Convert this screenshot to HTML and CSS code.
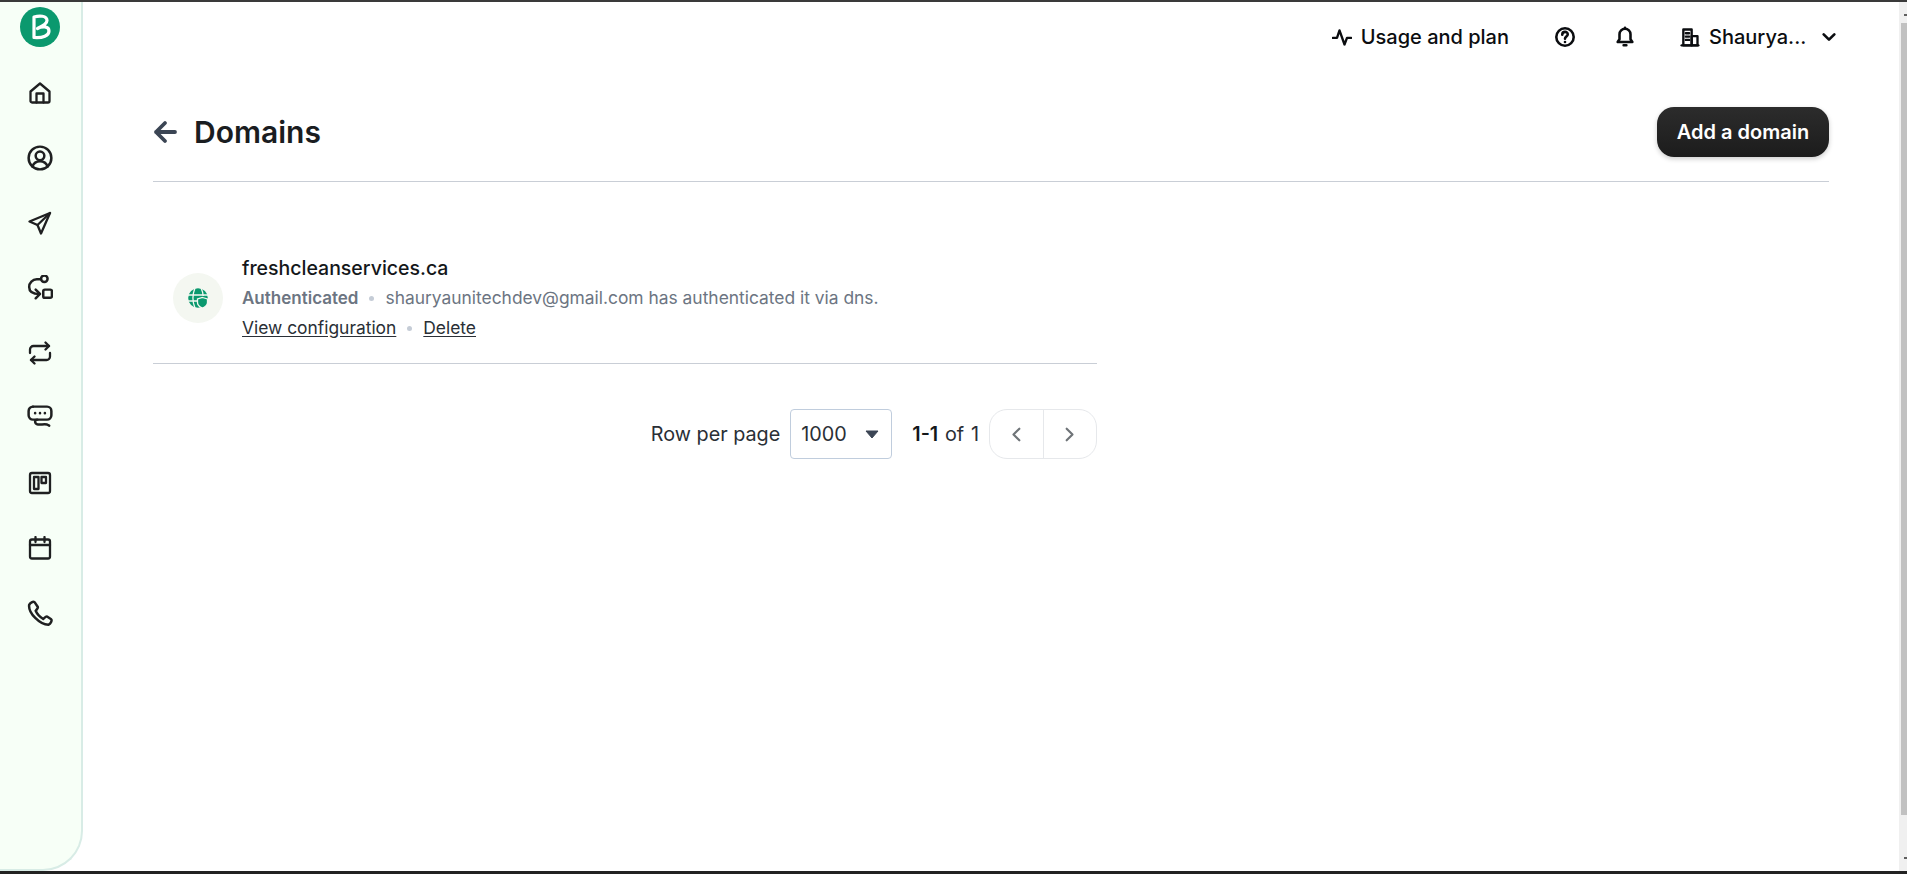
FILE: index.html
```html
<!DOCTYPE html>
<html lang="en">
<head>
<meta charset="utf-8">
<title>Domains</title>
<link rel="stylesheet" href="styles.css">
</head>
<body>
<div class="strip-top"></div>
<div class="window">
  <aside class="sidebar">
    <div class="logo"><svg viewBox="0 0 40 40" width="40" height="40"><circle cx="20" cy="20" r="20" fill="#0b996e"/><path d="M14 30.500V10c5-1.500 13-1.700 13 3.500 0 3.500-4.500 5.500-9.500 8 4.500-2.500 11.500-2.500 11.500 2.500 0 4.500-6 7.200-15 6.500z" fill="none" stroke="#fff" stroke-width="3.200" stroke-linejoin="round"/></svg></div>
    <nav class="nav">
      <a class="nav-item"><svg viewBox="0 0 24 24" width="24" height="24"><path d="M2.500 10.500 12 2.500l9.500 8v9.500a1.500 1.500 0 0 1-1.500 1.500H4a1.500 1.500 0 0 1-1.500-1.500z"/><path d="M8.500 21.500V12.500h7v9"/></svg></a>
      <a class="nav-item"><svg viewBox="0 0 24 24" width="26" height="26"><circle cx="12" cy="12" r="10.500"/><circle cx="12" cy="10" r="4"/><path d="M5 20c1-3 3.500-5 7-5s6 2 7 5"/></svg></a>
      <a class="nav-item"><svg viewBox="0 0 24 24" width="24" height="24"><path d="M22 2 1.500 10.500l8 3.500 3.500 8.500z"/><path d="M22 2 9.500 14"/></svg></a>
      <a class="nav-item"><svg viewBox="0 0 24 24" width="26" height="26"><circle cx="16" cy="3.500" r="3"/><rect x="15" y="13.500" width="8" height="7.500" rx="1.500"/><path d="M12.500 4H9a7 7 0 0 0-7 7c0 4 3 6.500 9.500 6.500"/><path d="M8 13.500l4 4-4 4"/></svg></a>
      <a class="nav-item"><svg viewBox="0 0 24 24" width="24" height="24"><path d="M17.500 1.500 21 5l-3.500 3.500"/><path d="M2 12V8.500A3.500 3.500 0 0 1 5.500 5H21"/><path d="M6.500 22.500 3 19l3.500-3.500"/><path d="M22 12v3.500a3.500 3.500 0 0 1-3.500 3.500H3"/></svg></a>
      <a class="nav-item"><svg viewBox="0 0 24 24" width="26" height="26"><path d="M5.500 1.500h13A4 4 0 0 1 22.500 5.500v4a4 4 0 0 1-4 4H9.500c-1.500 0-2 1-2 2s.8 2.500 2.500 2.500c3 .2 6-.5 8.500 0l2 1"/><path d="M5.500 1.500a4 4 0 0 0-4 4v4a4 4 0 0 0 4 4h4"/><path class="dots" d="M7.500 7.500h.01M12 7.500h.01M16.500 7.500h.01"/></svg></a>
      <a class="nav-item"><svg viewBox="0 0 24 24" width="24" height="24"><rect x="2" y="2" width="20" height="20" rx="2"/><rect x="6" y="6" width="4.500" height="12"/><rect x="13.500" y="6" width="4.500" height="6"/></svg></a>
      <a class="nav-item"><svg viewBox="0 0 24 24" width="24" height="24"><rect x="2" y="3.500" width="20" height="19" rx="2"/><path d="M2 9h20M7.500 1v5M16.500 1v5"/></svg></a>
      <a class="nav-item"><svg viewBox="0 0 24 24" width="26" height="26"><path d="M2 4.500c1-2 3.500-3.500 5-2.500l3 4.500c.5 1-1.500 2.500-2 3.500 1.500 3.500 3.500 5.500 7 7.500 1-.8 2.500-2.700 3.500-2.200l3.800 2.500c1 1-.3 4-2.300 5C12 23 1 12 2 4.500z"/></svg></a>
    </nav>
  </aside>
  <main class="main">
    <header class="topbar">
      <a class="top-link">
        <svg class="top-icon" viewBox="0 0 24 24" width="20" height="20"><path d="M1 13h5l3-9 6 17 3-8h5"/></svg>
        <span>Usage and plan</span>
      </a>
      <svg class="top-icon help" viewBox="0 0 24 24" width="22" height="22"><circle cx="12" cy="12" r="9.500"/><path d="M9 9.500c0-4 6-4 6-.5 0 2.500-3 2.500-3 5"/><path d="M12 17.500h.01"/></svg>
      <svg class="top-icon bell" viewBox="0 0 24 24" width="22" height="22"><path d="M4 17.500h16l-2-3V9a6 6 0 0 0-12 0v5.500z"/><path d="M12 2v1M10.500 21h3"/></svg>
      <a class="top-link account">
        <svg class="top-icon" viewBox="0 0 24 24" width="20" height="20"><path d="M2 22h20"/><rect x="4" y="3" width="10" height="19"/><rect x="14" y="11" width="7" height="11"/><path d="M7 7.500h4M7 11.500h4M7 15.500h4"/></svg>
        <span>Shaurya...</span>
        <svg class="top-icon chevron" viewBox="0 0 24 24" width="16" height="16"><path d="M4 8l8 8 8-8"/></svg>
      </a>
    </header>
    <section class="content">
      <div class="title-row">
        <div class="title-left">
          <svg class="back" viewBox="0 0 24 24" width="24" height="24"><path d="M22 12H3M12 3l-9 9 9 9"/></svg>
          <h1 class="title">Domains</h1>
        </div>
        <button class="primary">Add a domain</button>
      </div>
      <div class="list">
        <div class="domain">
          <div class="domain-icon"><svg viewBox="0 0 20 20" width="20" height="20"><circle cx="10" cy="10" r="9.800" fill="#0b996e"/><path d="M0 7h20M0 13h12M7 0c-2.500 6-2.500 14 0 20M13 0c1.500 3 2 5 2.200 8" fill="none" stroke="#f4f7f1" stroke-width="1.300"/><path d="M14.500 9.500l5 1.500v3.500c0 2.500-2.500 4.500-5 5.500-2.500-1-5-3-5-5.500V11z" fill="#0b996e" stroke="#f4f7f1" stroke-width="1.300"/></svg></div>
          <div class="domain-body">
            <div class="domain-name">freshcleanservices.ca</div>
            <div class="domain-status"><strong class="status">Authenticated</strong><span class="dot"></span><span>shauryaunitechdev@gmail.com has authenticated it via dns.</span></div>
            <div class="domain-actions"><a class="link">View configuration</a><span class="dot"></span><a class="link">Delete</a></div>
          </div>
        </div>
        <div class="pagination">
          <span class="per-page">Row per page</span>
          <div class="select"><span>1000</span><svg viewBox="0 0 14 9" width="14" height="9"><path d="M1 1h12L7 8z" fill="#3b4554" stroke="#3b4554" stroke-linejoin="round"/></svg></div>
          <span class="range"><b>1-1</b> of 1</span>
          <div class="pager">
            <button class="page-btn"><svg viewBox="0 0 12 18" width="10" height="15"><path d="M10 2 3 9l7 7"/></svg></button>
            <button class="page-btn"><svg viewBox="0 0 12 18" width="10" height="15"><path d="M2 2l7 7-7 7"/></svg></button>
          </div>
        </div>
      </div>
    </section>
  </main>
  <div class="scrollbar">
    <div class="arrow up"></div>
    <div class="thumb"></div>
    <div class="arrow down"></div>
  </div>
</div>
<div class="strip-bottom"></div>
</body>
</html>
```
FILE: styles.css
```css
* { box-sizing: border-box; }
html, body { height: 100%; margin: 0; overflow: hidden; }
body {
  display: flex;
  flex-direction: column;
  font-family: Inter, "Liberation Sans", sans-serif;
  color: #1f2429;
  background: #fff;
}
.strip-top { height: 2px; background: #3a3a3a; flex: none; }
.strip-bottom { height: 3px; background: #222; flex: none; }
.window { flex: 1; display: flex; min-height: 0; }

.sidebar {
  width: 83px;
  flex: none;
  background: #f7fff7;
  border-right: 2px solid #d8ece6;
  border-bottom: 2px solid #d8ece6;
  border-bottom-right-radius: 40px;
  display: flex;
  flex-direction: column;
  align-items: center;
  padding-top: 5px;
  padding-right: 1px;
}
.logo { height: 40px; display: flex; }
.nav { display: flex; flex-direction: column; margin-top: 13px; }
.nav-item { height: 65.100px; width: 40px; display: flex; align-items: center; justify-content: center; }
.nav-item svg { fill: none; stroke: #1f2021; stroke-width: 2.300; stroke-linecap: round; stroke-linejoin: round; }
.nav-item .dots { stroke-width: 2.400; }

.main { flex: 1; min-width: 0; display: flex; flex-direction: column; }
.topbar {
  display: flex;
  align-items: center;
  height: 70px;
  padding: 0 62px 0 70px;
  justify-content: flex-end;
  flex: none;
}
.top-link { display: flex; align-items: center; font-size: 20px; font-weight: 500; color: #0b0d10; }
.top-icon { fill: none; stroke: #0b0d10; stroke-width: 2.800; stroke-linecap: round; stroke-linejoin: round; flex: none; }
.top-link .top-icon { margin-right: 9px; }
.help { margin-left: 45px; }
.bell { margin-left: 38px; }
.account { margin-left: 44px; }
.account span { width: 112px; }
.top-link .chevron { margin: 0; stroke-width: 4; }

.content { padding: 0 70px; flex: 1; }
.title-row {
  display: flex;
  align-items: center;
  justify-content: space-between;
  height: 110px;
  padding-top: 10px;
  border-bottom: 1px solid #c9ced6;
}
.title-left { display: flex; align-items: center; gap: 17px; }
.back { fill: none; stroke: #3b4554; stroke-width: 3.800; stroke-linecap: round; stroke-linejoin: round; }
.title { margin: 0; font-size: 30px; font-weight: 600; line-height: 36px; color: #1a1d21; }
.primary {
  height: 50px;
  width: 172px;
  border: 0;
  border-radius: 17px;
  background: linear-gradient(#2c2c2c, #1c1c1c);
  color: #fff;
  font: 600 20px Inter, "Liberation Sans", sans-serif;
  box-shadow: 0 2px 5px rgba(0, 0, 0, .2);
}

.list { width: 944px; }
.domain {
  display: flex;
  align-items: center;
  height: 182px;
  padding: 51px 0 0 20px;
  gap: 19px;
  border-bottom: 1px solid #c9ced6;
}
.domain-icon {
  width: 50px;
  height: 50px;
  border-radius: 50%;
  background: #f4f7f1;
  display: flex;
  align-items: center;
  justify-content: center;
  flex: none;
}
.domain-body { display: flex; flex-direction: column; gap: 8px; }
.domain-name { font-size: 19.500px; font-weight: 500; line-height: 22px; color: #14171a; }
.domain-status { display: flex; align-items: center; font-size: 17.400px; line-height: 22px; color: #6c7582; height: 22px; }
.status { font-size: 17px; font-weight: 600; color: #6c7582; }
.dot { width: 5px; height: 5px; border-radius: 50%; background: #c5ccd6; margin: 0 11px 0 11px; }
.domain-actions { display: flex; align-items: center; font-size: 17.400px; line-height: 22px; color: #2a2f36; }
.link { text-decoration: underline; text-underline-offset: 2px; }

.pagination {
  display: flex;
  align-items: center;
  justify-content: flex-end;
  margin-top: 45px;
  font-size: 19.800px;
  color: #2a2f36;
}
.select {
  width: 102px;
  height: 50px;
  margin-left: 10px;
  padding: 0 12px 0 10px;
  border: 1px solid #c0cddd;
  border-radius: 4px;
  display: flex;
  align-items: center;
  justify-content: space-between;
}
.range { margin-left: 20px; word-spacing: 1.200px; }
.range b { font-weight: 600; color: #14171a; }
.pager {
  display: flex;
  margin-left: 10px;
  width: 108px;
  height: 50px;
  border: 1px solid #e6e8eb;
  border-radius: 18px;
}
.page-btn {
  flex: 1;
  border: 0;
  background: none;
  display: flex;
  align-items: center;
  justify-content: center;
  padding: 0;
}
.page-btn + .page-btn { border-left: 1px solid #e6e8eb; }
.page-btn svg { fill: none; stroke: #6f7478; stroke-width: 2.600; stroke-linecap: round; stroke-linejoin: round; }

.scrollbar { width: 8px; flex: none; background: #f0f0f0; display: flex; flex-direction: column; align-items: stretch; }
.thumb { height: 792px; background: #c1c1c1; margin-left: 2px; }
.arrow { height: 21px; position: relative; flex: none; }
.arrow.down { flex: 1; }
.arrow::after { content: ""; position: absolute; right: 0; width: 3px; height: 2px; background: #606060; }
.arrow.up::after { top: 12px; }
.arrow.down::after { bottom: 12px; }
```
